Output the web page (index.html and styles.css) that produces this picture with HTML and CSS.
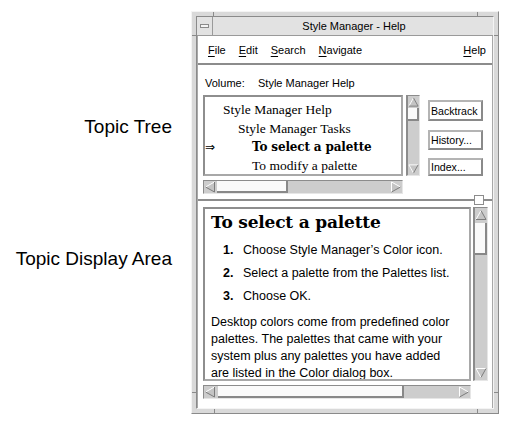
FILE: index.html
```html
<!DOCTYPE html>
<html>
<head>
<meta charset="utf-8">
<link rel="stylesheet" href="styles.css">
</head>
<body>
<svg class="defs" width="0" height="0" aria-hidden="true">
  <symbol id="a-up" viewBox="0 0 12 12">
    <polygon points="6,1.5 11,10.5 1,10.5" fill="#c4c4c4"/>
    <polyline points="1,10.5 6,1.5" fill="none" stroke="#ffffff"/>
    <polyline points="6,1.5 11,10.5 1,10.5" fill="none" stroke="#7c7c7c"/>
  </symbol>
  <symbol id="a-down" viewBox="0 0 12 12">
    <polygon points="1,1.5 11,1.5 6,10.5" fill="#c4c4c4"/>
    <polyline points="6,10.5 1,1.5 11,1.5" fill="none" stroke="#ffffff"/>
    <polyline points="11,1.5 6,10.5" fill="none" stroke="#7c7c7c"/>
  </symbol>
  <symbol id="a-left" viewBox="0 0 12 12">
    <polygon points="1.5,6 10.5,1 10.5,11" fill="#c4c4c4"/>
    <polyline points="1.5,6 10.5,1" fill="none" stroke="#ffffff"/>
    <polyline points="10.5,1 10.5,11 1.5,6" fill="none" stroke="#7c7c7c"/>
  </symbol>
  <symbol id="a-right" viewBox="0 0 12 12">
    <polygon points="1.5,1 10.5,6 1.5,11" fill="#c4c4c4"/>
    <polyline points="1.5,11 1.5,1 10.5,6" fill="none" stroke="#ffffff"/>
    <polyline points="10.5,6 1.5,11" fill="none" stroke="#7c7c7c"/>
  </symbol>
</svg>

<div class="page">
  <div class="labels">
    <div class="label">Topic Tree</div>
    <div class="label label-display">Topic Display Area</div>
  </div>

  <div class="window">
    <i class="mk mk-tl"></i><i class="mk mk-tr"></i>
    <i class="mk mk-bl"></i><i class="mk mk-br"></i>
    <i class="mk mk-lt"></i><i class="mk mk-lb"></i>
    <i class="mk mk-rt"></i><i class="mk mk-rb"></i>
    <div class="inner">
      <div class="titlebar">
        <div class="minbtn"><span class="minicon"></span></div>
        <div class="title">Style Manager - Help</div>
      </div>
      <div class="client">
        <div class="menubar">
          <span class="menu"><u>F</u>ile</span>
          <span class="menu"><u>E</u>dit</span>
          <span class="menu"><u>S</u>earch</span>
          <span class="menu"><u>N</u>avigate</span>
          <span class="menu menu-help"><u>H</u>elp</span>
        </div>

        <div class="volume"><span class="vol-label">Volume:</span><span>Style Manager Help</span></div>

        <div class="treepane">
          <div class="treecol">
            <div class="treerow">
              <div class="listbox">
                <div class="trow t1">Style Manager Help</div>
                <div class="trow t2">Style Manager Tasks</div>
                <div class="trow current"><span class="pointer">⇒</span><b>To select a palette</b></div>
                <div class="trow t3">To modify a palette</div>
              </div>
              <div class="vscroll vs-tree">
                <svg class="arr"><use href="#a-up"/></svg>
                <div class="vthumb vt-tree"></div>
                <div class="fill"></div>
                <svg class="arr"><use href="#a-down"/></svg>
              </div>
            </div>
            <div class="hscroll hs-tree">
              <svg class="harr"><use href="#a-left"/></svg>
              <div class="hthumb ht-tree"></div>
              <div class="fill"></div>
              <svg class="harr"><use href="#a-right"/></svg>
            </div>
          </div>
          <div class="buttons">
            <div class="btn b1">Backtrack</div>
            <div class="btn b2">History...</div>
            <div class="btn b3">Index...</div>
          </div>
        </div>

        <div class="sash"><span class="sash-handle"></span></div>

        <div class="displaypane">
          <div class="disprow">
            <div class="docbox">
              <h1 class="doc-title">To select a palette</h1>
              <ol class="steps">
                <li><span class="num">1.</span>Choose Style Manager’s Color icon.</li>
                <li><span class="num">2.</span>Select a palette from the Palettes list.</li>
                <li><span class="num">3.</span>Choose OK.</li>
              </ol>
              <p class="doc-text">Desktop colors come from predefined color<br>palettes. The palettes that came with your<br>system plus any palettes you have added<br>are listed in the Color dialog box.</p>
            </div>
            <div class="vscroll vs-doc">
              <svg class="arr arr-doc"><use href="#a-up"/></svg>
              <div class="vthumb vt-doc"></div>
              <div class="fill"></div>
              <svg class="arr arr-doc"><use href="#a-down"/></svg>
            </div>
          </div>
          <div class="hscroll hs-doc">
            <svg class="harr"><use href="#a-left"/></svg>
            <div class="hthumb ht-doc"></div>
            <div class="fill"></div>
            <svg class="harr"><use href="#a-right"/></svg>
          </div>
        </div>
      </div>
    </div>
  </div>
</div>
</body>
</html>
```

FILE: styles.css
```css
html, body {
  margin: 0;
  padding: 0;
  background: #ffffff;
}
body {
  width: 508px;
  height: 427px;
  overflow: hidden;
  font-family: "Liberation Sans", Arial, sans-serif;
  color: #000;
}
.defs { position: absolute; width: 0; height: 0; }

.page {
  display: flex;
  padding-top: 11px;
}

/* callout labels */
.labels {
  width: 172px;
  display: flex;
  flex-direction: column;
  align-items: flex-end;
  padding-top: 106px;
}
.label {
  font-size: 19px;
  line-height: 20px;
  white-space: nowrap;
}
.label-display { margin-top: 112px; }

/* window frame */
.window {
  position: relative;
  margin-left: 19px;
  width: 308px;
  height: 403px;
  box-sizing: border-box;
  background: #d9d9d9;
  border: 1px solid;
  border-color: #f4f4f4 #8a8a8a #8a8a8a #f4f4f4;
  padding: 4px;
  display: flex;
}
.mk { position: absolute; background: #8a8a8a; }
.mk-tl { left: 21px; top: 0; width: 1px; height: 4px; }
.mk-tr { left: 285px; top: 0; width: 1px; height: 4px; }
.mk-bl { left: 22px; bottom: 0; width: 1px; height: 4px; }
.mk-br { left: 285px; bottom: 0; width: 1px; height: 4px; }
.mk-lt { left: 0; top: 23px; width: 4px; height: 1px; }
.mk-lb { left: 0; top: 380px; width: 4px; height: 1px; }
.mk-rt { right: 0; top: 23px; width: 4px; height: 1px; }
.mk-rb { right: 0; top: 380px; width: 4px; height: 1px; }

.inner {
  flex: 1;
  display: flex;
  flex-direction: column;
  border: 1px solid;
  border-color: #8a8a8a #f4f4f4 #f4f4f4 #8a8a8a;
}

.titlebar {
  height: 18px;
  display: flex;
  background: #e2e2e2;
  border-bottom: 1px solid #9a9a9a;
}
.minbtn {
  width: 15px;
  border-right: 1px solid #9a9a9a;
  display: flex;
  align-items: center;
  justify-content: center;
}
.minicon {
  width: 7px;
  height: 2px;
  border: 1px solid #8a8a8a;
  background: #f4f4f4;
}
.title {
  flex: 1;
  text-align: center;
  font-size: 11px;
  line-height: 18px;
  padding-left: 2px;
}

/* white client */
.client {
  flex: 1;
  display: flex;
  flex-direction: column;
  background: #ffffff;
  border-left: 1px solid #a8a8a8;
  border-right: 1px solid #a8a8a8;
}

.menubar {
  display: flex;
  gap: 13px;
  font-size: 11px;
  line-height: 13px;
  padding: 8px 6px 6px 10px;
  border-bottom: 2px solid #8c8c8c;
}
.menu u {
  text-decoration: underline;
  text-underline-offset: 2px;
}
.menu-help { margin-left: auto; }

.volume {
  margin-top: 12px;
  padding-left: 7px;
  font-size: 11px;
  line-height: 13px;
  display: flex;
}
.vol-label { width: 53px; }

/* topic tree */
.treepane {
  margin-top: 5px;
  padding-left: 5px;
  display: flex;
}
.treecol {
  display: flex;
  flex-direction: column;
  gap: 4px;
}
.treerow {
  display: flex;
  gap: 3px;
  height: 81px;
}
.listbox {
  width: 200px;
  box-sizing: border-box;
  border: 2px solid;
  border-color: #8e8e8e #a8a8a8 #a8a8a8 #8e8e8e;
  padding-top: 4px;
  overflow: hidden;
  font-family: "Liberation Serif", "Times New Roman", serif;
  font-size: 13.5px;
}
.trow {
  line-height: 18.6px;
  height: 18.6px;
  white-space: nowrap;
}
.t1 { padding-left: 18px; }
.t2 { padding-left: 33px; }
.t3 { padding-left: 47px; }
.current b {
  font-family: "DejaVu Serif", serif;
  font-weight: bold;
  font-size: 12px;
  letter-spacing: -0.15px;
}
.pointer {
  display: inline-block;
  width: 47px;
  font-family: "DejaVu Sans", sans-serif;
  font-size: 12px;
}

/* scrollbars */
.vscroll {
  box-sizing: border-box;
  width: 14px;
  background: #cdcdcd;
  border: 1px solid;
  border-color: #8c8c8c #e6e6e6 #e6e6e6 #8c8c8c;
  border-left-width: 2px;
  display: flex;
  flex-direction: column;
}
.vs-doc { width: 15px; }
.arr { width: 11px; height: 12px; display: block; flex: none; }
.arr-doc { width: 12px; height: 14px; }
.vthumb {
  box-sizing: border-box;
  background: #fafafa;
  border-right: 2px solid #888888;
  border-bottom: 2px solid #888888;
  flex: none;
}
.vt-tree { height: 13px; }
.vt-doc { height: 32px; margin-top: 1px; }
.fill { flex: 1; }

.hscroll {
  box-sizing: border-box;
  height: 14px;
  background: #cdcdcd;
  border: 1px solid;
  border-color: #8c8c8c #e6e6e6 #e6e6e6 #8c8c8c;
  display: flex;
  align-items: center;
}
.harr { width: 12px; height: 12px; display: block; flex: none; }
.hthumb {
  box-sizing: border-box;
  height: 12px;
  background: #fafafa;
  border-right: 2px solid #888888;
  border-bottom: 2px solid #888888;
  flex: none;
}
.hs-tree { width: 200px; }
.ht-tree { width: 71px; margin-left: 1px; }
.hs-doc { width: 268px; }
.ht-doc { width: 186px; margin-left: 2px; }

/* buttons */
.buttons {
  margin-left: 8px;
  display: flex;
  flex-direction: column;
}
.btn {
  box-sizing: border-box;
  width: 55px;
  background: #ffffff;
  border: 2px solid;
  border-color: #b4b4b4 #8a8a8a #8a8a8a #b4b4b4;
  font-size: 10.6px;
  padding-left: 1px;
  display: flex;
  align-items: center;
  white-space: nowrap;
  overflow: hidden;
}
.b1 { height: 21px; margin-top: 5px; }
.b2 { height: 20px; margin-top: 9px; }
.b3 { height: 18px; margin-top: 8px; }

/* sash */
.sash {
  height: 13px;
  box-sizing: border-box;
  padding-top: 1px;
  padding-right: 8px;
  display: flex;
  justify-content: flex-end;
  align-items: flex-start;
  background: linear-gradient(#8c8c8c, #8c8c8c) 0 5px / 100% 2px no-repeat;
}
.sash-handle {
  width: 10px;
  height: 10px;
  box-sizing: border-box;
  background: #ffffff;
  border: 1px solid #8c8c8c;
}

/* topic display */
.displaypane {
  padding-left: 5px;
  display: flex;
  flex-direction: column;
  gap: 4px;
}
.disprow {
  display: flex;
  gap: 2px;
  height: 174px;
}
.docbox {
  width: 268px;
  box-sizing: border-box;
  border: 2px solid;
  border-color: #8e8e8e #a8a8a8 #a8a8a8 #8e8e8e;
  padding: 3px 0 0 6px;
  overflow: hidden;
}
.doc-title {
  margin: 0;
  font-family: "DejaVu Serif", serif;
  font-weight: bold;
  font-size: 17px;
  line-height: 20px;
  letter-spacing: -0.2px;
  white-space: nowrap;
}
.steps {
  list-style: none;
  margin: 6.5px 0 0 0;
  padding: 0 0 0 12px;
  font-size: 12.5px;
  line-height: 23px;
}
.steps li { display: flex; white-space: nowrap; }
.num {
  width: 20px;
  font-weight: bold;
}
.doc-text {
  margin: 6px 0 0 0;
  font-size: 12.5px;
  line-height: 17px;
  white-space: nowrap;
}
```
